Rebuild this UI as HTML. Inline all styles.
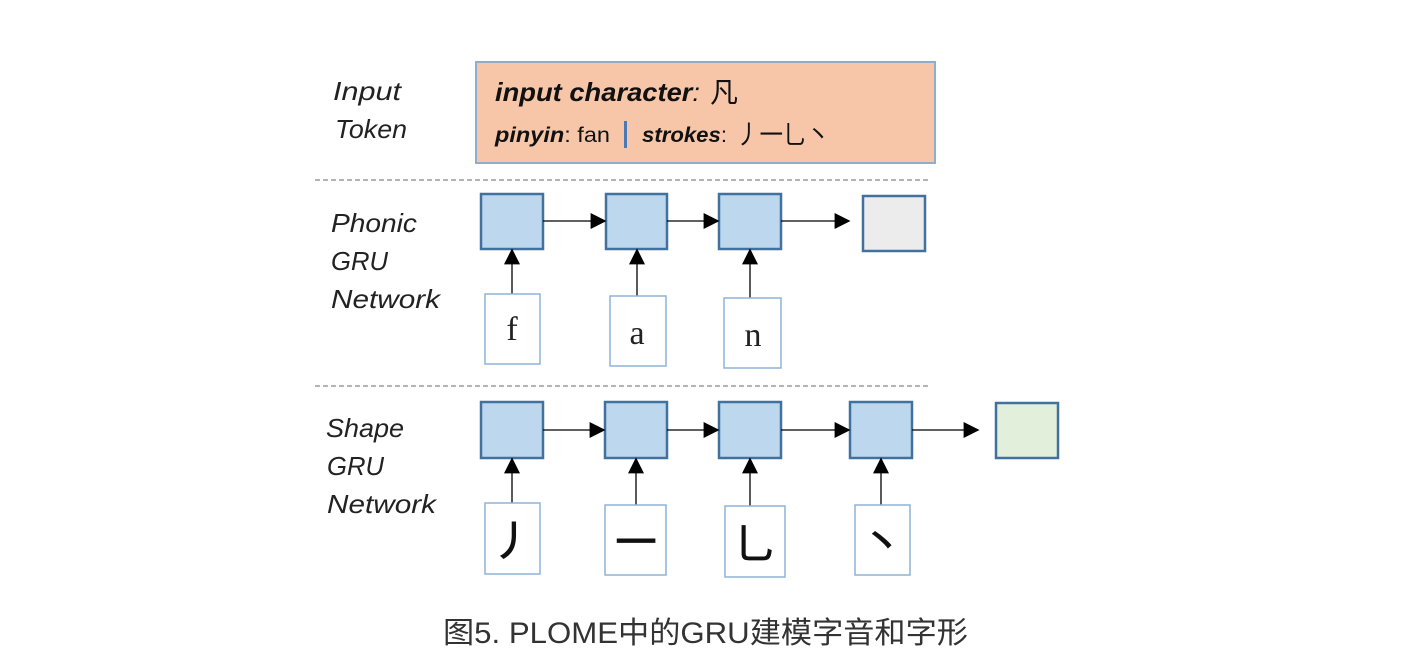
<!DOCTYPE html>
<html><head><meta charset="utf-8"><style>
html,body{margin:0;padding:0;background:#fff;width:1406px;height:662px;overflow:hidden}
svg{display:block}
.lb{font-family:"Liberation Sans","DejaVu Sans",sans-serif;font-style:italic;font-size:26px;fill:#222}
</style></head><body>
<svg width="1406" height="662" viewBox="0 0 1406 662" xmlns="http://www.w3.org/2000/svg">
<defs><marker id="a" viewBox="0 0 10 10" refX="9" refY="5" markerWidth="16" markerHeight="16" markerUnits="userSpaceOnUse" orient="auto"><path d="M0,0 L10,5 L0,10 z" fill="#000"/></marker></defs>
<text class="lb" x="333" y="100" textLength="68" lengthAdjust="spacingAndGlyphs">Input</text>
<text class="lb" x="335" y="138" textLength="72" lengthAdjust="spacingAndGlyphs">Token</text>
<text class="lb" x="331" y="232" textLength="86" lengthAdjust="spacingAndGlyphs">Phonic</text>
<text class="lb" x="331" y="270" textLength="57" lengthAdjust="spacingAndGlyphs">GRU</text>
<text class="lb" x="331" y="308" textLength="109" lengthAdjust="spacingAndGlyphs">Network</text>
<text class="lb" x="326" y="437" textLength="78" lengthAdjust="spacingAndGlyphs">Shape</text>
<text class="lb" x="327" y="475" textLength="57" lengthAdjust="spacingAndGlyphs">GRU</text>
<text class="lb" x="327" y="513" textLength="109" lengthAdjust="spacingAndGlyphs">Network</text>

<rect x="476" y="62" width="459" height="101" fill="#f7c6a8" stroke="#8eaed0" stroke-width="2"/>
<text x="495" y="101" font-family="Liberation Sans,sans-serif" font-size="26" font-style="italic" font-weight="bold" fill="#111" textLength="205" lengthAdjust="spacingAndGlyphs">input character<tspan font-weight="normal">:</tspan></text>
<text x="710" y="102" font-family="Noto Sans CJK SC,sans-serif" font-size="28" fill="#111">凡</text>
<text x="495" y="142" font-family="Liberation Sans,sans-serif" font-size="21" fill="#111" textLength="115" lengthAdjust="spacingAndGlyphs"><tspan font-style="italic" font-weight="bold">pinyin</tspan>: fan</text>
<rect x="624" y="121" width="3" height="27" fill="#4a7ab5"/>
<text x="642" y="142" font-family="Liberation Sans,sans-serif" font-size="21" fill="#111" textLength="85" lengthAdjust="spacingAndGlyphs"><tspan font-style="italic" font-weight="bold">strokes</tspan>:</text>
<text x="736" y="144" font-family="Noto Sans CJK SC,sans-serif" font-size="26" fill="#111" textLength="94" lengthAdjust="spacingAndGlyphs">丿一乚丶</text>

<line x1="315" y1="180" x2="928" y2="180" stroke="#888" stroke-width="1.3" stroke-dasharray="5,3"/>
<line x1="315" y1="386" x2="928" y2="386" stroke="#888" stroke-width="1.3" stroke-dasharray="5,3"/>

<g fill="#bdd7ee" stroke="#41719c" stroke-width="2.5">
<rect x="481" y="194" width="62" height="55"/><rect x="606" y="194" width="61" height="55"/><rect x="719" y="194" width="62" height="55"/>
<rect x="481" y="402" width="62" height="56"/><rect x="605" y="402" width="62" height="56"/><rect x="719" y="402" width="62" height="56"/><rect x="850" y="402" width="62" height="56"/>
</g>
<rect x="863" y="196" width="62" height="55" fill="#ececec" stroke="#41719c" stroke-width="2.5"/>
<rect x="996" y="403" width="62" height="55" fill="#e2efda" stroke="#41719c" stroke-width="2.5"/>

<g stroke="#000" stroke-width="1.3" marker-end="url(#a)">
<line x1="543" y1="221" x2="605" y2="221"/><line x1="667" y1="221" x2="718" y2="221"/><line x1="781" y1="221" x2="849" y2="221"/>
<line x1="543" y1="430" x2="604" y2="430"/><line x1="667" y1="430" x2="718" y2="430"/><line x1="781" y1="430" x2="849" y2="430"/><line x1="912" y1="430" x2="978" y2="430"/>
<line x1="512" y1="294" x2="512" y2="250"/><line x1="637" y1="296" x2="637" y2="250"/><line x1="750" y1="298" x2="750" y2="250"/>
<line x1="512" y1="503" x2="512" y2="459"/><line x1="636" y1="505" x2="636" y2="459"/><line x1="750" y1="506" x2="750" y2="459"/><line x1="881" y1="505" x2="881" y2="459"/>
</g>

<g fill="#fff" stroke="#8eb4d8" stroke-width="1.5">
<rect x="485" y="294" width="55" height="70"/><rect x="610" y="296" width="56" height="70"/><rect x="724" y="298" width="57" height="70"/>
<rect x="485" y="503" width="55" height="71"/><rect x="605" y="505" width="61" height="70"/><rect x="725" y="506" width="60" height="71"/><rect x="855" y="505" width="55" height="70"/>
</g>
<g font-family="Liberation Serif,serif" font-size="34" fill="#222" text-anchor="middle">
<text x="512" y="340">f</text><text x="637" y="344">a</text><text x="753" y="346">n</text>
</g>
<g font-family="Noto Sans CJK SC,sans-serif" font-size="42" fill="#111" text-anchor="middle" font-weight="500">
<text x="512" y="556">丿</text><text x="636" y="557">一</text><text x="755" y="559">乚</text><text x="882" y="557">丶</text>
</g>

<text x="443" y="643" font-family="Liberation Sans,Noto Sans CJK SC,sans-serif" font-size="30" fill="#333" textLength="525" lengthAdjust="spacingAndGlyphs">图5. PLOME中的GRU建模字音和字形</text>
</svg>
</body></html>
